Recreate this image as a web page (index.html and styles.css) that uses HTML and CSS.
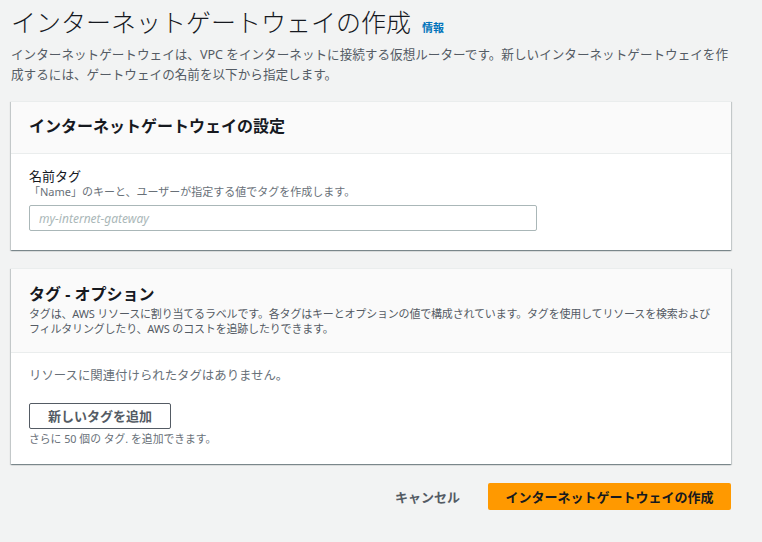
FILE: index.html
```html
<!DOCTYPE html>
<html lang="ja">
<head>
<meta charset="utf-8">
<title>インターネットゲートウェイの作成</title>
<link rel="stylesheet" href="styles.css">
</head>
<body>
<div class="page">
  <h1 class="title">インターネットゲートウェイの作成<a class="info" href="#">情報</a></h1>
  <p class="lead">インターネットゲートウェイは、VPC をインターネットに接続する仮想ルーターです。新しいインターネットゲートウェイを作成するには、ゲートウェイの名前を以下から指定します。</p>

  <section class="card">
    <div class="card-head">
      <h2 class="card-title">インターネットゲートウェイの設定</h2>
    </div>
    <div class="card-body card-body-1">
      <div class="label">名前タグ</div>
      <div class="hint">「Name」のキーと、ユーザーが指定する値でタグを作成します。</div>
      <input class="text-input" type="text" placeholder="my-internet-gateway">
    </div>
  </section>

  <section class="card card-2">
    <div class="card-head card-head-2">
      <h2 class="card-title">タグ - オプション</h2>
      <p class="card-desc">タグは、AWS リソースに割り当てるラベルです。各タグはキーとオプションの値で構成されています。タグを使用してリソースを検索およびフィルタリングしたり、AWS のコストを追跡したりできます。</p>
    </div>
    <div class="card-body card-body-2">
      <div class="empty">リソースに関連付けられたタグはありません。</div>
      <button class="btn-normal" type="button">新しいタグを追加</button>
      <div class="caption">さらに 50 個の タグ. を追加できます。</div>
    </div>
  </section>

  <div class="actions">
    <button class="btn-link" type="button">キャンセル</button>
    <button class="btn-primary" type="button">インターネットゲートウェイの作成</button>
  </div>
</div>
</body>
</html>
```
FILE: styles.css
```css
html, body {
  margin: 0;
  padding: 0;
  background: #f2f3f3;
}
body {
  font-family: "Noto Sans", "Noto Sans CJK JP", sans-serif;
  color: #16191f;
}
.page {
  width: 720px;
  margin: 0 0 0 11px;
  padding-top: 6px;
}
.title {
  margin: 0;
  height: 30px;
  font-size: 25px;
  line-height: 30px;
  font-weight: 300;
  color: #16191f;
  font-family: "Noto Sans CJK JP", sans-serif;
}
.info {
  font-size: 11px;
  line-height: 0;
  font-weight: 700;
  color: #0073bb;
  text-decoration: none;
  margin-left: 11px;
}
.lead {
  margin: 9px 0 0;
  height: 40px;
  font-size: 12.6px;
  line-height: 20px;
  color: #545b64;
}
.card {
  margin-top: 16px;
  background: #fff;
  border-top: 1px solid #eaeded;
  box-shadow: 0 1px 1px 0 rgba(0,28,36,0.3), 1px 1px 1px 0 rgba(0,28,36,0.15), -1px 1px 1px 0 rgba(0,28,36,0.15);
}
.card-2 {
  margin-top: 18px;
}
.card-head {
  background: #fafafa;
  border-bottom: 1px solid #eaeded;
  padding: 13px 18px 16px;
}
.card-head-2 {
  padding: 14px 18px 16px;
}
.card-title {
  margin: 0;
  height: 22px;
  font-size: 16px;
  line-height: 22px;
  font-weight: 700;
  color: #16191f;
}
.card-desc {
  margin: 1px 0 0;
  font-size: 11px;
  letter-spacing: -0.18px;
  line-height: 15px;
  color: #545b64;
}
.card-body-1 {
  padding: 14px 18px 19px;
}
.label {
  height: 17px;
  font-size: 13px;
  line-height: 17px;
  color: #16191f;
}
.hint {
  height: 14px;
  font-size: 11px;
  line-height: 14px;
  color: #687078;
}
.text-input {
  display: block;
  box-sizing: border-box;
  margin-top: 6px;
  width: 508px;
  height: 26px;
  padding: 0 9px;
  border: 1px solid #aab7b8;
  border-radius: 2px;
  background: #fff;
  font-family: "Noto Sans", "Noto Sans CJK JP", sans-serif;
  font-size: 12px;
  color: #16191f;
  outline: none;
}
.text-input::placeholder {
  color: #aab7b8;
  font-style: italic;
}
.card-body-2 {
  padding: 14px 18px 18px;
}
.empty {
  height: 18px;
  font-size: 12.4px;
  line-height: 18px;
  color: #687078;
}
.btn-normal {
  display: block;
  box-sizing: border-box;
  margin-top: 18px;
  height: 26px;
  padding: 0 18px;
  border: 1px solid #545b64;
  border-radius: 2px;
  background: #fff;
  font-family: "Noto Sans", "Noto Sans CJK JP", sans-serif;
  font-size: 13px;
  font-weight: 700;
  color: #545b64;
  line-height: 24px;
}
.caption {
  height: 14px;
  margin-top: 3px;
  font-size: 10.8px;
  line-height: 14px;
  color: #687078;
}
.actions {
  display: flex;
  justify-content: flex-end;
  align-items: center;
  gap: 14px;
  margin-top: 19px;
}
.btn-link {
  height: 27px;
  padding: 0 14px;
  border: 0;
  background: transparent;
  font-family: "Noto Sans", "Noto Sans CJK JP", sans-serif;
  font-size: 13px;
  font-weight: 700;
  color: #545b64;
}
.btn-primary {
  box-sizing: border-box;
  height: 27px;
  width: 243px;
  padding: 0;
  border: 0;
  border-radius: 2px;
  background: #ff9900;
  font-family: "Noto Sans", "Noto Sans CJK JP", sans-serif;
  font-size: 13px;
  font-weight: 700;
  color: #16191f;
}
```
